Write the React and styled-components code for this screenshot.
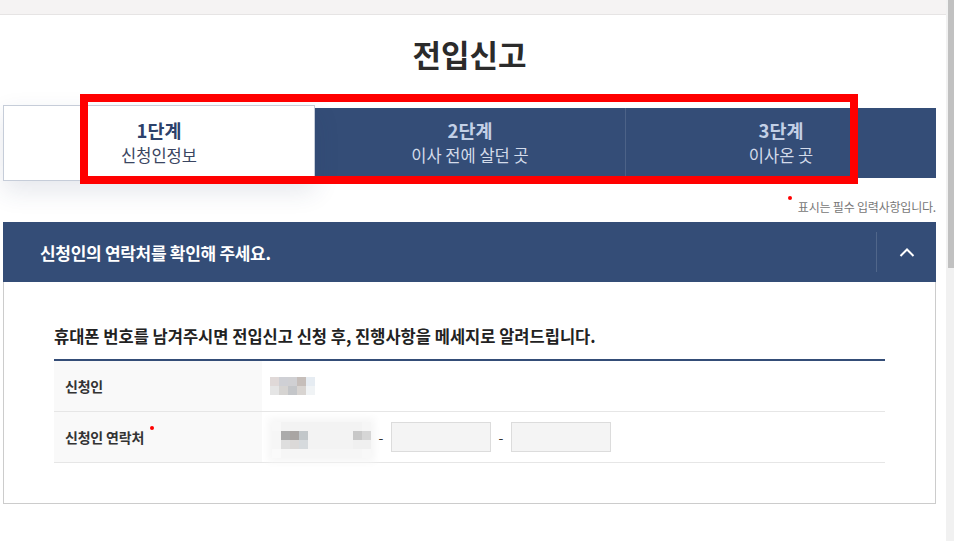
import React from "react";
import styled, { createGlobalStyle } from "styled-components";

const NAVY = "#344d77";

const nameCells = [
  ["#e0d9d8", "#cfd0d5", "#d0d0d3", "#c6beba", "#e6ecf2"],
  ["#e5e5e5", "#d6d4d2", "#c4c6c9", "#d8d4d1", "#f0f3f5"],
];

const F = "#f3f3f3";
const phoneCells = [
  ["#f8f8f8", F, F, F, F, F, F, F, F, F, "#f6f6f6"],
  ["#f6f6f6", "#ababab", "#a9a5a3", "#c2c7ca", F, F, F, F, F, "#c8c8c8", "#d6d6d6"],
  ["#f6f6f6", "#dedede", "#dbd9d8", "#d6dadd", F, F, F, F, F, "#f0f0f0", "#f0f0f0"],
  ["#fafafa", "#f6f6f6", "#f6f6f6", "#f6f6f6", "#f6f6f6", "#f6f6f6", "#f6f6f6", "#f6f6f6", "#f6f6f6", "#f6f6f6", "#f8f8f8"],
];

const steps = [
  { no: "1단계", label: "신청인정보", active: true },
  { no: "2단계", label: "이사 전에 살던 곳" },
  { no: "3단계", label: "이사온 곳" },
];

const Mosaic = ({ cells }) => (
  <MosaicGrid $cols={cells[0].length}>
    {cells.flat().map((c, i) => (
      <Cell key={i} style={{ background: c }} />
    ))}
  </MosaicGrid>
);

const App = () => {
  return (
    <>
      <GlobalStyles />
      <TopBar />
      <Page>
        <Title>전입신고</Title>
        <StepArea>
          <Steps>
            {steps.map((s, i) => (
              <Step key={s.no} $active={s.active} $divider={i === 2}>
                <StepNo $active={s.active}>{s.no}</StepNo>
                <StepLabel $active={s.active}>{s.label}</StepLabel>
              </Step>
            ))}
          </Steps>
          <Highlight />
        </StepArea>
        <Note>
          <Req>표시는 필수 입력사항입니다.</Req>
        </Note>
        <Accordion>
          <AccHead>
            <AccTitle>신청인의 연락처를 확인해 주세요.</AccTitle>
            <AccToggle>
              <svg width="16" height="10" viewBox="0 0 16 10">
                <polyline
                  points="1.5,9 8,2.5 14.5,9"
                  fill="none"
                  stroke="#fff"
                  strokeWidth="2"
                />
              </svg>
            </AccToggle>
          </AccHead>
          <AccBody>
            <Lead>
              휴대폰 번호를 남겨주시면 전입신고 신청 후, 진행사항을 메세지로
              알려드립니다.
            </Lead>
            <FormTable>
              <tbody>
                <tr>
                  <Th>신청인</Th>
                  <Td>
                    <Mosaic cells={nameCells} />
                  </Td>
                </tr>
                <tr>
                  <Th>
                    <Required>신청인 연락처</Required>
                  </Th>
                  <Td>
                    <PhoneRow>
                      <Blurred>
                        <Mosaic cells={phoneCells} />
                      </Blurred>
                      <Dash>-</Dash>
                      <Input />
                      <Dash>-</Dash>
                      <Input />
                    </PhoneRow>
                  </Td>
                </tr>
              </tbody>
            </FormTable>
          </AccBody>
        </Accordion>
      </Page>
      <Scrollbar>
        <Thumb />
      </Scrollbar>
    </>
  );
};

const GlobalStyles = createGlobalStyle`
  * {
    box-sizing: border-box;
    margin: 0;
    padding: 0;
  }
  body {
    font-family: "Noto Sans CJK KR", "Noto Sans", sans-serif;
    background: #fff;
    color: #333;
    overflow: hidden;
  }
`;

const TopBar = styled.div`
  width: 946px;
  height: 15px;
  background: #f5f3f3;
  border-bottom: 1px solid #e6e4e4;
`;

const Page = styled.main`
  width: 933px;
  margin-left: 3px;
`;

const Title = styled.h1`
  margin-top: 21px;
  text-align: center;
  font-size: 31px;
  line-height: 36px;
  font-weight: 700;
  letter-spacing: 0;
  color: #2b2b2b;
`;

const StepArea = styled.div`
  position: relative;
  margin-top: 33px;
`;

const Steps = styled.ol`
  display: flex;
  align-items: center;
  height: 76px;
  list-style: none;
`;

const Step = styled.li`
  flex: 1;
  display: flex;
  flex-direction: column;
  align-items: center;
  justify-content: center;
  height: ${({ $active }) => ($active ? "76px" : "70px")};
  background: ${({ $active }) => ($active ? "#fff" : NAVY)};
  border: ${({ $active }) => ($active ? "1px solid #c6cdd9" : "none")};
  border-left: ${({ $divider }) =>
    $divider ? "1px solid rgba(255,255,255,0.12)" : undefined};
  box-shadow: ${({ $active }) =>
    $active ? "0 10px 24px rgba(40, 60, 100, 0.12)" : "none"};
  position: relative;
  z-index: ${({ $active }) => ($active ? 1 : 0)};
`;

const StepNo = styled.strong`
  font-size: 18.5px;
  line-height: 25px;
  font-weight: 700;
  letter-spacing: 0;
  color: ${({ $active }) => ($active ? "#2c416b" : "#c3d0e6")};
`;

const StepLabel = styled.span`
  font-size: 16.5px;
  line-height: 25px;
  letter-spacing: 0;
  color: ${({ $active }) => ($active ? "#3a4561" : "#d3dbea")};
`;

const Highlight = styled.div`
  position: absolute;
  left: 77px;
  top: -11px;
  width: 778px;
  height: 90px;
  border: 8px solid #ff0000;
  pointer-events: none;
  z-index: 2;
`;

const Note = styled.p`
  padding: 18px 0 7px;
  text-align: right;
  font-size: 12px;
  line-height: 16px;
  letter-spacing: -0.2px;
  color: #777;
`;

const Req = styled.span`
  position: relative;
  &::before {
    content: "";
    position: absolute;
    left: -10px;
    top: -2px;
    width: 4px;
    height: 4px;
    border-radius: 50%;
    background: #f00;
  }
`;

const Accordion = styled.section`
  border: 1px solid #cccccc;
  border-top: none;
`;

const AccHead = styled.div`
  display: flex;
  align-items: center;
  justify-content: space-between;
  height: 60px;
  margin: 0 -1px;
  padding-left: 37px;
  background: ${NAVY};
`;

const AccTitle = styled.h2`
  font-size: 17px;
  font-weight: 700;
  letter-spacing: -0.3px;
  color: #fff;
`;

const AccToggle = styled.button`
  display: flex;
  align-items: center;
  justify-content: center;
  width: 60px;
  height: 40px;
  border: none;
  border-left: 1px solid rgba(255, 255, 255, 0.14);
  background: transparent;
  cursor: pointer;
`;

const AccBody = styled.div`
  padding: 42px 50px 40px;
`;

const Lead = styled.h3`
  font-size: 16.5px;
  line-height: 24px;
  font-weight: 700;
  letter-spacing: 0;
  color: #222;
  margin-bottom: 11px;
`;

const FormTable = styled.table`
  width: 100%;
  border-collapse: collapse;
  border-top: 2px solid ${NAVY};
  tr {
    height: 51px;
    border-bottom: 1px solid #e6e6e6;
  }
`;

const Th = styled.th`
  width: 208px;
  padding-left: 11px;
  background: #f9f9f9;
  text-align: left;
  font-size: 14px;
  font-weight: 700;
  letter-spacing: -0.2px;
  color: #333;
`;

const Td = styled.td`
  padding-left: 8px;
`;

const Required = styled.span`
  position: relative;
  &::after {
    content: "";
    position: absolute;
    right: -10px;
    top: -1px;
    width: 4px;
    height: 4px;
    border-radius: 50%;
    background: #f00;
  }
`;

const MosaicGrid = styled.div`
  display: grid;
  grid-template-columns: repeat(${({ $cols }) => $cols}, 9px);
  grid-auto-rows: 9px;
  width: max-content;
`;

const Cell = styled.span``;

const PhoneRow = styled.div`
  display: flex;
  align-items: center;
  gap: 7px;
`;

const Blurred = styled.div`
  margin-left: 2px;
  margin-top: 6px;
  box-shadow: 0 0 8px 4px #f6f6f6;
`;

const Dash = styled.span`
  width: 6px;
  text-align: center;
  font-size: 14px;
  color: #333;
`;

const Input = styled.input`
  width: 100px;
  height: 30px;
  background: #f4f4f4;
  border: 1px solid #dcdcdc;
  outline: none;
`;

const Scrollbar = styled.div`
  position: fixed;
  top: 0;
  right: 0;
  width: 8px;
  height: 100vh;
  background: #f1f1f1;
`;

const Thumb = styled.div`
  margin-left: 2px;
  width: 6px;
  height: 268px;
  background: #c1c1c1;
`;

export default App;
